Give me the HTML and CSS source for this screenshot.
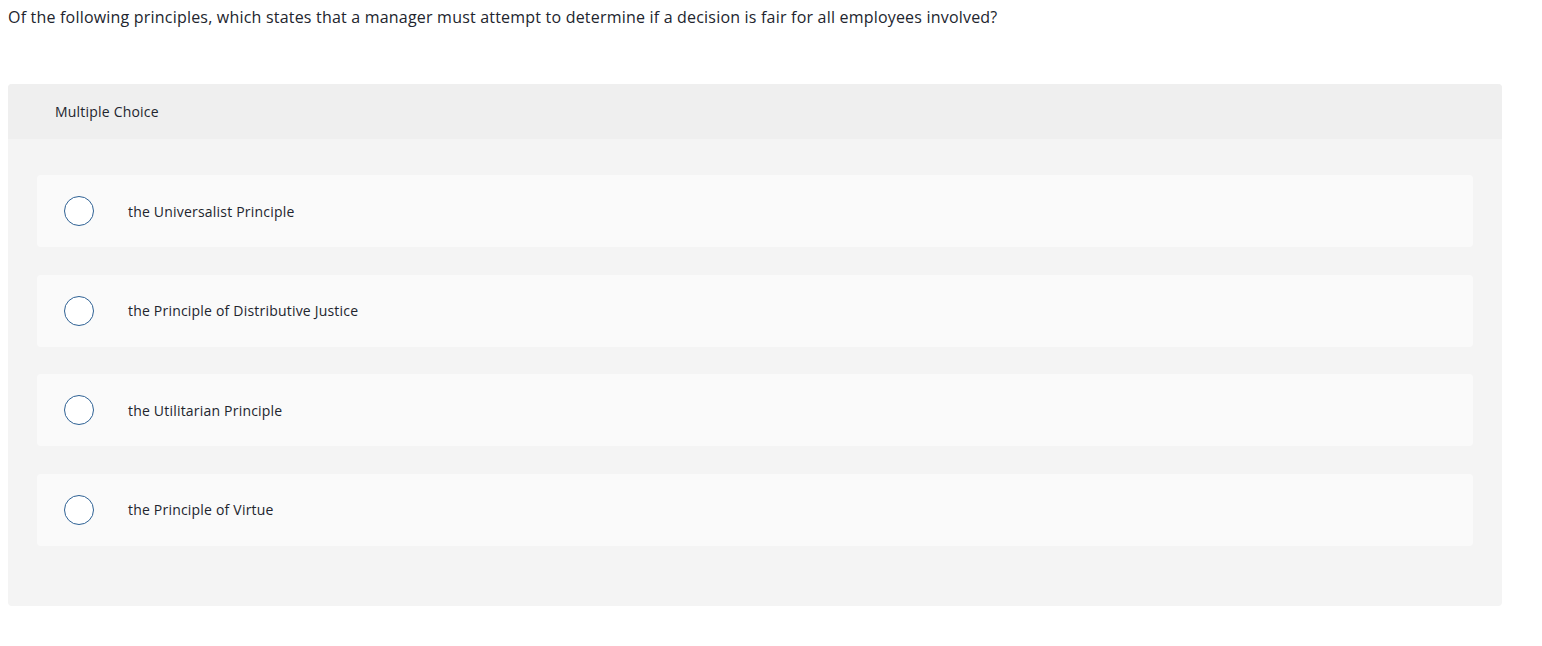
FILE: index.html
```html
<!DOCTYPE html>
<html>
<head>
<meta charset="utf-8">
<link rel="stylesheet" href="styles.css">
</head>
<body>
<p class="question">Of the following principles, which states that a manager must attempt to determine if a decision is fair for all employees involved?</p>
<section class="mc">
  <header class="mc-head">Multiple Choice</header>
  <div class="mc-body">
    <div class="opt"><span class="radio"></span><span class="label">the Universalist Principle</span></div>
    <div class="opt"><span class="radio"></span><span class="label">the Principle of Distributive Justice</span></div>
    <div class="opt"><span class="radio"></span><span class="label">the Utilitarian Principle</span></div>
    <div class="opt"><span class="radio"></span><span class="label">the Principle of Virtue</span></div>
  </div>
</section>
</body>
</html>
```
FILE: styles.css
```css
html, body { margin: 0; padding: 0; background: #fff; }
body {
  font-family: "Open Sans", "Lato", sans-serif;
  color: #22252e;
  padding: 0 8px;
  letter-spacing: 0.2px;
}
.question {
  margin: 0;
  padding-top: 7px;
  font-size: 16px;
  line-height: 20px;
}
.mc {
  margin-top: 57px;
  width: 1494px;
  background: #f4f4f4;
  border-radius: 4px;
  overflow: hidden;
}
.mc-head {
  background: #efefef;
  height: 55px;
  padding-left: 47px;
  display: flex;
  align-items: center;
  font-size: 14px;
}
.mc-body {
  padding: 36px 29px 60px 29px;
  display: flex;
  flex-direction: column;
  gap: 27.5px;
}
.opt {
  height: 72px;
  background: #fafafa;
  border-radius: 4px;
  display: flex;
  align-items: center;
  padding-left: 27px;
}
.radio {
  width: 28px;
  height: 28px;
  border: 1.5px solid #2e6194;
  border-radius: 50%;
  background: #fff;
  flex: none;
}
.label {
  margin-left: 34px;
  font-size: 14px;
}
```
